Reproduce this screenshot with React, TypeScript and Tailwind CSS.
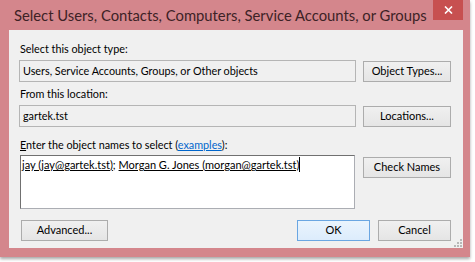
import React from "react";

const font = { fontFamily: 'Lato, "Liberation Sans", Arial, sans-serif' };

function Btn({ children, w, primary }: { children: React.ReactNode; w: string; primary?: boolean }) {
  return (
    <div
      className={`${w} h-[21px] flex items-center justify-center text-[11px] text-black border ${
        primary
          ? "border-[#6aa6e2] bg-gradient-to-b from-[#eaf4fd] to-[#dcecfc]"
          : "border-[#acacac] bg-gradient-to-b from-[#f0f0f0] to-[#e5e5e5]"
      }`}
    >
      {children}
    </div>
  );
}

export default function App() {
  return (
    <div className="w-[475px] h-[262px] bg-white" style={font}>
      <div className="w-[470px] h-[257px] bg-[#d4868c] flex flex-col shadow-[0_2px_3px_rgba(0,0,0,0.35)]">
        <div className="h-[30px] flex items-start relative">
          <div className="pl-[14px] pt-[5px] text-[14.8px] leading-[20px] text-[#3d2226] whitespace-nowrap">
            Select Users, Contacts, Computers, Service Accounts, or Groups
          </div>
          <div className="absolute right-[7px] top-0 w-[30px] h-[20px] bg-[#c75050] flex items-center justify-center">
            <svg width="9" height="8" viewBox="0 0 9 8">
              <path d="M1 0.5 L8 7.5 M8 0.5 L1 7.5" stroke="white" strokeWidth="1.6" />
            </svg>
          </div>
        </div>
        <div className="ml-[9px] w-[454px] h-[218px] bg-[#f0f0f0] relative flex flex-col text-[10.8px] text-black">
          <div className="ml-[11px] mt-[11px] h-[16px] leading-[16px]">Select this object type:</div>
          <div className="mt-[3px] ml-[10px] flex items-center gap-[7px] h-[22px]">
            <div className="w-[337px] h-[22px] border border-[#b5b5b5] bg-[#f0f0f0] flex items-center pl-[3px] leading-[16px]">
              Users, Service Accounts, Groups, or Other objects
            </div>
            <Btn w="w-[88px]">Object Types...</Btn>
          </div>
          <div className="ml-[11px] mt-[4px] h-[16px] leading-[16px]">From this location:</div>
          <div className="mt-[3px] ml-[10px] flex items-center gap-[7px] h-[22px]">
            <div className="w-[337px] h-[22px] border border-[#b5b5b5] bg-[#f0f0f0] flex items-center pl-[3px] leading-[16px]">
              gartek.tst
            </div>
            <Btn w="w-[88px]">Locations...</Btn>
          </div>
          <div className="ml-[11px] mt-[10px] h-[16px] leading-[16px]">
            <span className="underline">E</span>nter the object names to select (
            <span className="text-[#0066cc] underline">examples</span>):
          </div>
          <div className="mt-[2px] ml-[11px] flex items-start gap-[8px]">
            <div className="w-[335px] h-[54px] bg-white border border-[#abadb3] border-t-[#707070] border-l-[#707070] pl-[1px] pt-[1px] text-[11px] leading-[16px] whitespace-nowrap">
              <span className="underline">jay (jay@gartek.tst)</span>; <span className="underline">Morgan G. Jones (morgan@gartek.tst)</span>
              <span className="inline-block w-[1px] h-[15px] bg-black align-[-3px]" />
            </div>
            <div className="mt-[2px]">
              <Btn w="w-[88px]">Check Names</Btn>
            </div>
          </div>
          <div className="mt-[11px] flex items-center">
            <div className="ml-[12px]">
              <Btn w="w-[87px]">Advanced...</Btn>
            </div>
            <div className="ml-auto mr-[12px] flex gap-[8px]">
              <Btn w="w-[73px]" primary>
                OK
              </Btn>
              <Btn w="w-[73px]">Cancel</Btn>
            </div>
          </div>
          <svg className="absolute right-[1px] bottom-[1px]" width="9" height="9" viewBox="0 0 9 9">
            <rect x="7" y="1" width="2" height="2" fill="#b8b8b8" />
            <rect x="4" y="4" width="2" height="2" fill="#b8b8b8" />
            <rect x="7" y="4" width="2" height="2" fill="#b8b8b8" />
            <rect x="1" y="7" width="2" height="2" fill="#b8b8b8" />
            <rect x="4" y="7" width="2" height="2" fill="#b8b8b8" />
            <rect x="7" y="7" width="2" height="2" fill="#b8b8b8" />
          </svg>
        </div>
      </div>
    </div>
  );
}
